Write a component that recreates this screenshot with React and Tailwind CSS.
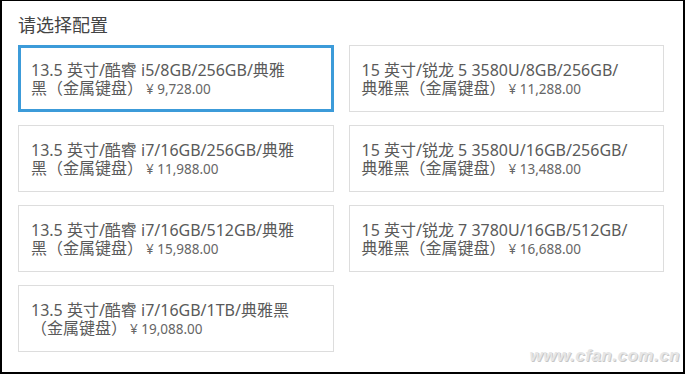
import React from 'react';

const options = [
  { line1: '13.5 英寸/酷睿 i5/8GB/256GB/典雅', line2: '黑（金属键盘）', price: '¥ 9,728.00', selected: true },
  { line1: '15 英寸/锐龙 5 3580U/8GB/256GB/', line2: '典雅黑（金属键盘）', price: '¥ 11,288.00' },
  { line1: '13.5 英寸/酷睿 i7/16GB/256GB/典雅', line2: '黑（金属键盘）', price: '¥ 11,988.00' },
  { line1: '15 英寸/锐龙 5 3580U/16GB/256GB/', line2: '典雅黑（金属键盘）', price: '¥ 13,488.00' },
  { line1: '13.5 英寸/酷睿 i7/16GB/512GB/典雅', line2: '黑（金属键盘）', price: '¥ 15,988.00' },
  { line1: '15 英寸/锐龙 7 3780U/16GB/512GB/', line2: '典雅黑（金属键盘）', price: '¥ 16,688.00' },
  { line1: '13.5 英寸/酷睿 i7/16GB/1TB/典雅黑', line2: '（金属键盘）', price: '¥ 19,088.00' },
];

const font = { fontFamily: '"Noto Sans", "Noto Sans CJK SC", sans-serif' };

export default function App() {
  return (
    <div
      className="relative w-[685px] h-[374px] bg-white border-t border-x-2 border-b-2 border-black overflow-hidden"
      style={font}
    >
      <div className="pl-[16px] pr-[19px] pt-[12px]">
        {/* Title */}
        <h1 className="text-[18px] leading-[24px] text-[#444]">请选择配置</h1>

        {/* Config options */}
        <div className="grid grid-cols-2 gap-x-[15px] gap-y-[13px] mt-[8px]">
          {options.map((o) => (
            <div
              key={o.price}
              className={`h-[67px] flex flex-col justify-center bg-white ${
                o.selected
                  ? 'border-[3px] border-[#3c9bd9] pl-[10px]'
                  : 'border border-[#dddddd] pl-[12px]'
              }`}
            >
              <div className="whitespace-nowrap text-[16px] leading-[18px] text-[#5a5a5a]">{o.line1}</div>
              <div className="flex items-baseline whitespace-nowrap text-[16px] leading-[18px] text-[#5a5a5a]">
                <span>{o.line2}</span>
                <span className="ml-[3px] text-[13.5px] leading-[16px] text-[#666]">{o.price}</span>
              </div>
            </div>
          ))}
        </div>
      </div>

      {/* Watermark */}
      <div
        className="absolute right-[3px] bottom-[8px] text-[17px] leading-none font-bold italic text-[#e6e6e6] tracking-[0.5px]"
        style={{ fontFamily: '"Liberation Sans", Arial, sans-serif', textShadow: '1px 1px 0 #c8c8c8' }}
      >
        www.cfan.com.cn
      </div>
    </div>
  );
}
